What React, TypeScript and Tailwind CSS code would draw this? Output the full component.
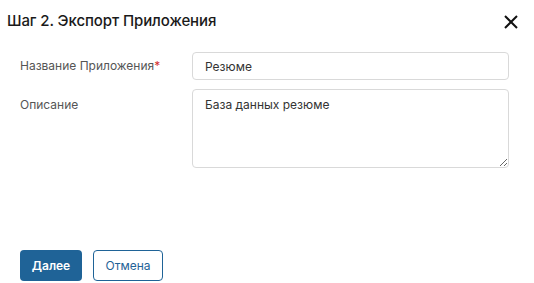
export default function App() {
  return (
    <div className="w-[534px] h-[283px] bg-white font-['Inter',sans-serif] relative">
      <div className="flex items-center justify-between pl-[7px] pr-[16px] pt-[8px] h-[35px]">
        <h1 className="text-[15px] font-medium text-[#1a1a1a] tracking-[-0.1px]">Шаг 2. Экспорт Приложения</h1>
        <svg width="14" height="14" viewBox="0 0 14 14" className="mt-[1px]">
          <path d="M1 1L13 13M13 1L1 13" stroke="#111" strokeWidth="2" />
        </svg>
      </div>

      <div className="mt-[17px] pl-[20px] pr-[25px] flex flex-col gap-[9px]">
        <div className="flex items-center">
          <label className="w-[172px] text-[12px] text-[#555]">
            Название Приложения<span className="text-[#d32f2f]">*</span>
          </label>
          <input
            defaultValue="Резюме"
            className="flex-1 h-[28px] border border-[#d9d9d9] rounded-[4px] px-[12px] text-[12px] text-[#333] outline-none"
          />
        </div>
        <div className="flex items-start">
          <label className="w-[172px] text-[12px] text-[#555] pt-[7px]">Описание</label>
          <textarea
            defaultValue="База данных резюме"
            className="flex-1 h-[79px] border border-[#d9d9d9] rounded-[4px] px-[12px] py-[6px] text-[12px] text-[#333] outline-none resize-y"
          />
        </div>
      </div>

      <div className="flex gap-[11px] pl-[20px] mt-[82px]">
        <button className="w-[62px] h-[31px] rounded-[4px] bg-[#1f6397] text-white text-[12px] font-semibold">
          Далее
        </button>
        <button className="w-[70px] h-[31px] rounded-[4px] border border-[#1f6397] text-[#1f6397] text-[12px] bg-white">
          Отмена
        </button>
      </div>
    </div>
  );
}
